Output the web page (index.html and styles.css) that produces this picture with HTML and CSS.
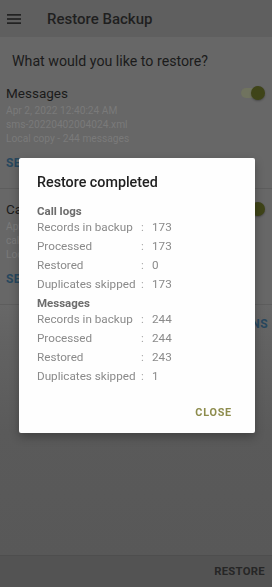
FILE: index.html
```html
<!DOCTYPE html>
<html lang="en">
<head>
<meta charset="utf-8">
<title>Restore Backup</title>
<link rel="stylesheet" href="styles.css">
</head>
<body>
<div class="app">
  <header class="topbar">
    <svg class="menu-icon" width="14" height="10" viewBox="0 0 14 10" aria-hidden="true">
      <rect x="0" y="0" width="14" height="1.7" fill="#222"/>
      <rect x="0" y="4.15" width="14" height="1.7" fill="#222"/>
      <rect x="0" y="8.3" width="14" height="1.7" fill="#222"/>
    </svg>
    <h1 class="topbar-title">Restore Backup</h1>
  </header>

  <main class="content">
    <p class="question">What would you like to restore?</p>

    <section class="item">
      <div class="item-head">
        <span class="item-title">Messages</span>
        <span class="switch"><span class="track"></span><span class="thumb"></span></span>
      </div>
      <div class="item-sub">Apr 2, 2022 12:40:24 AM</div>
      <div class="item-sub">sms-20220402004024.xml</div>
      <div class="item-sub">Local copy - 244 messages</div>
      <div class="item-action">SELECT ANOTHER BACKUP</div>
    </section>

    <section class="item">
      <div class="item-head">
        <span class="item-title">Call logs</span>
        <span class="switch"><span class="track"></span><span class="thumb"></span></span>
      </div>
      <div class="item-sub">Apr 2, 2022 12:40:24 AM</div>
      <div class="item-sub">calls-20220402004024.xml</div>
      <div class="item-sub">Local copy - 173 calls</div>
      <div class="item-action">SELECT ANOTHER BACKUP</div>
    </section>

    <div class="options-row"><span class="options-btn">ADVANCED OPTIONS</span></div>
    <div class="filler"></div>
  </main>

  <footer class="bottombar">
    <span class="restore-btn">RESTORE</span>
  </footer>
</div>

<div class="overlay">
  <div class="dialog">
    <h2 class="dialog-title">Restore completed</h2>

    <div class="group-title">Call logs</div>
    <div class="stats">
      <span class="label">Records in backup</span><span class="colon">:</span><span class="value">173</span>
      <span class="label">Processed</span><span class="colon">:</span><span class="value">173</span>
      <span class="label">Restored</span><span class="colon">:</span><span class="value">0</span>
      <span class="label">Duplicates skipped</span><span class="colon">:</span><span class="value">173</span>
    </div>

    <div class="group-title group-second">Messages</div>
    <div class="stats">
      <span class="label">Records in backup</span><span class="colon">:</span><span class="value">244</span>
      <span class="label">Processed</span><span class="colon">:</span><span class="value">244</span>
      <span class="label">Restored</span><span class="colon">:</span><span class="value">243</span>
      <span class="label">Duplicates skipped</span><span class="colon">:</span><span class="value">1</span>
    </div>

    <div class="dialog-actions"><span class="close-btn">CLOSE</span></div>
  </div>
</div>
</body>
</html>
```

FILE: styles.css
```css
* { box-sizing: border-box; }

html, body {
  margin: 0;
  padding: 0;
  height: 100%;
}

body {
  font-family: Roboto, "Noto Sans", "Liberation Sans", sans-serif;
  background: #676767;
  overflow: hidden;
}

.app {
  display: flex;
  flex-direction: column;
  height: 100vh;
}

.topbar {
  height: 37px;
  flex: none;
  background: #5f5f5f;
  display: flex;
  align-items: center;
  padding-left: 7px;
  gap: 26px;
}

.menu-icon { display: block; flex: none; }

.topbar-title {
  margin: 0;
  font-size: 15px;
  font-weight: 500;
  color: #1f1f1f;
  line-height: 20px;
}

.content {
  flex: 1;
  display: flex;
  flex-direction: column;
  background: #676767;
}

.question {
  margin: 0;
  padding: 14px 12px 2px;
  font-size: 14.2px;
  line-height: 20px;
  color: #1b1b1b;
  white-space: nowrap;
}

.item {
  padding: 11px 7px 15px 6px;
  border-bottom: 1px solid #5d5d5d;
}

.item-head {
  display: flex;
  align-items: center;
  justify-content: space-between;
  height: 18px;
}

.item-title {
  font-size: 13.5px;
  line-height: 18px;
  color: #1b1b1b;
}

.switch {
  position: relative;
  width: 24px;
  height: 14px;
}

.switch .track {
  position: absolute;
  left: 0;
  top: 2px;
  width: 22px;
  height: 10px;
  border-radius: 5px;
  background: #70735f;
}

.switch .thumb {
  position: absolute;
  right: 0;
  top: 0;
  width: 14px;
  height: 14px;
  border-radius: 50%;
  background: #3f4418;
  box-shadow: 0 1px 2px rgba(0,0,0,0.3);
}

.item-sub {
  font-size: 10.2px;
  line-height: 14px;
  color: #7a7a7a;
  white-space: nowrap;
}

.item-head + .item-sub { margin-top: 2px; }

.item-action {
  margin-top: 7px;
  font-size: 12px;
  line-height: 20px;
  font-weight: 700;
  letter-spacing: 0.4px;
  color: #27475e;
  white-space: nowrap;
}

.options-row {
  display: flex;
  justify-content: flex-end;
  padding: 9px 4px 8px 6px;
  background: linear-gradient(#676767, #626262);
}

.options-btn {
  font-size: 12px;
  line-height: 20px;
  font-weight: 700;
  letter-spacing: 0.4px;
  color: #27475e;
}

.filler {
  flex: 1;
  background: linear-gradient(#626262 0, #5a5a5a 90px, #585858 100%);
}

.bottombar {
  flex: none;
  height: 32px;
  background: #535353;
  border-top: 1px solid #4e4e4e;
  display: flex;
  align-items: center;
  justify-content: flex-end;
  padding-right: 7px;
}

.restore-btn {
  font-size: 11.3px;
  font-weight: 700;
  letter-spacing: 0.3px;
  color: #262626;
  line-height: 20px;
}

/* dialog over the dimmed page */
.overlay {
  position: fixed;
  inset: 0;
  display: flex;
  justify-content: flex-start;
  align-items: flex-start;
  padding: 158px 0 0 19px;
}

.dialog {
  width: 236px;
  height: 275px;
  background: #fefefe;
  border-radius: 2px;
  box-shadow: 0 4px 10px rgba(0,0,0,0.28);
  padding: 14px 23px 0 18px;
  display: flex;
  flex-direction: column;
}

.dialog-title {
  margin: 0;
  font-size: 14.3px;
  font-weight: 500;
  line-height: 20px;
  color: #212121;
  white-space: nowrap;
}

.group-title {
  margin-top: 12px;
  font-size: 11.5px;
  font-weight: 700;
  line-height: 14px;
  color: #6c6c6c;
  white-space: nowrap;
}

.group-second { margin-top: 2px; }

.stats {
  display: grid;
  grid-template-columns: 103px 12px auto;
  line-height: 19px;
  font-size: 11.7px;
  color: #8a8a8a;
  white-space: nowrap;
}

.colon {
  color: #a5a5a5;
  padding-left: 1px;
}

.dialog-actions {
  margin-top: 8px;
  height: 36px;
  display: flex;
  align-items: center;
  justify-content: flex-end;
}

.close-btn {
  font-size: 10.8px;
  font-weight: 700;
  letter-spacing: 0.8px;
  color: #8d8c4d;
}
```
